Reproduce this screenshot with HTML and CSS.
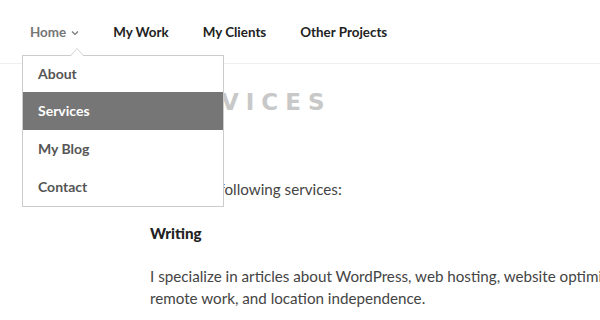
FILE: index.html
```html
<!DOCTYPE html>
<html lang="en">
<head>
<meta charset="utf-8">
<title>Services</title>
<link rel="stylesheet" href="styles.css">
</head>
<body>
<header class="site-nav">
  <nav class="menu">
    <div class="menu-item current">
      <a href="#">Home</a>
      <svg class="chev" width="8" height="6" viewBox="0 0 8 6"><path d="M1 1.5 L4 4.5 L7 1.5" fill="none" stroke="#767676" stroke-width="1.2"/></svg>
      <ul class="submenu">
        <li><a href="#">About</a></li>
        <li class="active"><a href="#">Services</a></li>
        <li><a href="#">My Blog</a></li>
        <li><a href="#">Contact</a></li>
      </ul>
    </div>
    <div class="menu-item"><a href="#">My Work</a></div>
    <div class="menu-item"><a href="#">My Clients</a></div>
    <div class="menu-item"><a href="#">Other Projects</a></div>
  </nav>
</header>
<main class="content">
  <h1 class="page-title">Services</h1>
  <p class="intro">I offer the following services:</p>
  <h3 class="service">Writing</h3>
  <p class="desc">I specialize in articles about WordPress, web hosting, website optimization, remote work, and location independence.</p>
</main>
</body>
</html>
```
FILE: styles.css
```css
html, body {
  margin: 0;
  padding: 0;
  background: #fff;
  overflow: hidden;
}
body {
  font-family: "Lato", "Liberation Sans", sans-serif;
  color: #333;
  width: 600px;
  height: 320px;
}
a {
  text-decoration: none;
  color: inherit;
}
.site-nav {
  height: 63px;
  border-bottom: 1px solid #eee;
}
.menu {
  display: flex;
  align-items: center;
  height: 63px;
  padding-left: 30px;
  gap: 34px;
  font-size: 13.4px;
  font-weight: 700;
  color: #222;
}
.menu-item {
  position: relative;
  display: flex;
  align-items: center;
  line-height: 20px;
}
.menu-item.current {
  color: #767676;
}
.chev {
  margin-left: 5px;
  margin-top: 2px;
}
.submenu {
  position: absolute;
  left: -8px;
  top: 33px;
  width: 200px;
  margin: 0;
  padding: 0;
  list-style: none;
  background: #fff;
  border: 1px solid #ccc;
  z-index: 10;
}
.submenu::before,
.submenu::after {
  content: "";
  position: absolute;
  left: 47px;
  width: 0;
  height: 0;
  border-left: 7px solid transparent;
  border-right: 7px solid transparent;
}
.submenu::before {
  top: -8px;
  border-bottom: 8px solid #ccc;
}
.submenu::after {
  top: -7px;
  border-bottom: 8px solid #fff;
}
.submenu li a {
  display: block;
  height: 38px;
  line-height: 38px;
  padding-left: 15px;
  font-size: 14px;
  color: #555;
  font-weight: 700;
}
.submenu li:first-child a {
  height: 36px;
  line-height: 36px;
}
.submenu li.active a {
  background: #767676;
  color: #fff;
}
.content {
  padding: 25px 0 0 150px;
}
.page-title {
  margin: 0;
  font-family: "DejaVu Sans", "Lato", sans-serif;
  font-size: 23px;
  line-height: 26px;
  font-weight: 700;
  text-transform: uppercase;
  letter-spacing: 7px;
  color: #c8c8c8;
}
.intro {
  margin: 63px 0 0;
  font-size: 15.2px;
  line-height: 22px;
  color: #444;
}
.service {
  margin: 22px 0 0;
  font-size: 15.2px;
  line-height: 22px;
  font-weight: 900;
  color: #222;
}
.desc {
  margin: 21px 0 0;
  font-size: 15.2px;
  line-height: 22px;
  color: #444;
  width: 520px;
}
```
